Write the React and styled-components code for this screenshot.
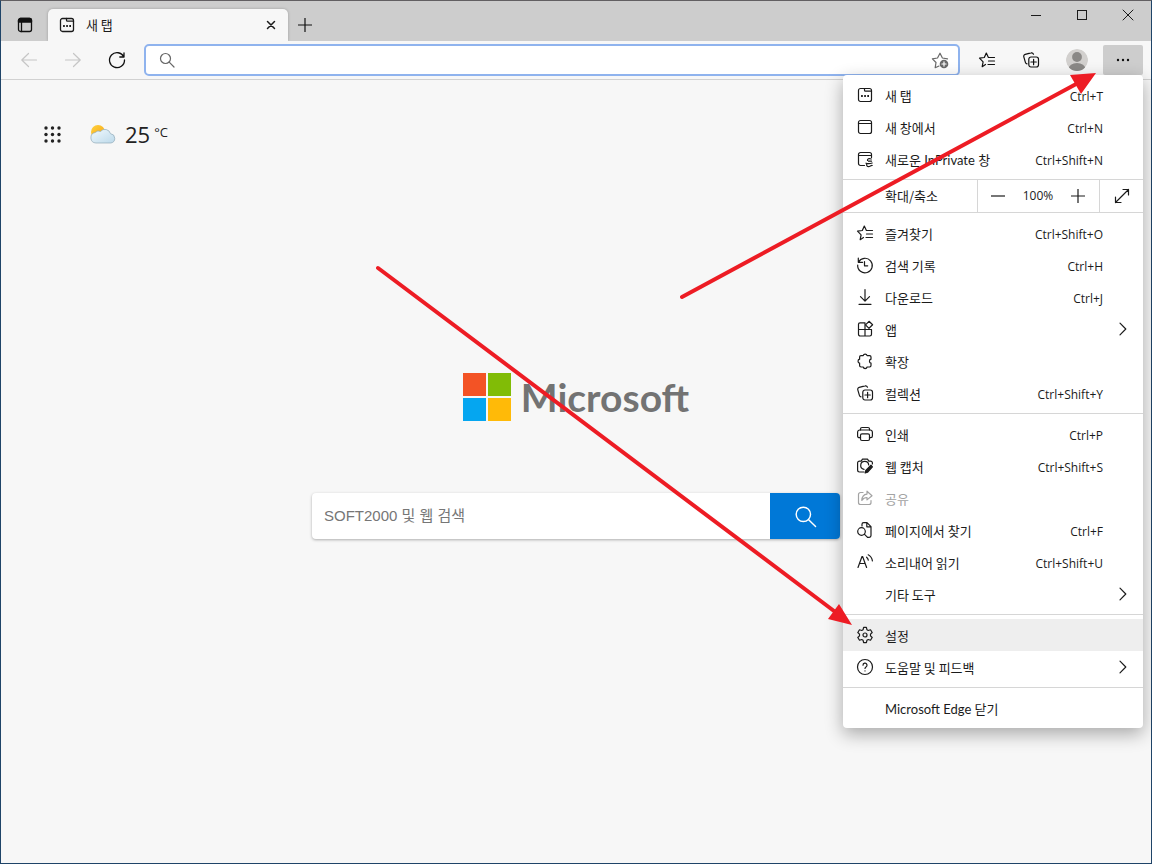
import React from "react";
import styled, { createGlobalStyle, css } from "styled-components";

const latin = `"Open Sans", "Noto Sans CJK KR", sans-serif`;
const korean = `"Noto Sans CJK KR", "Open Sans", sans-serif`;
const mixed = `Lato, "Noto Sans CJK KR", sans-serif`;

const GlobalStyle = createGlobalStyle`
  *, *::before, *::after { box-sizing: border-box; }
  body { margin: 0; background: #f7f7f7; color: #1b1b1b; font: 13px/16px ${korean}; }
  button, input { font: inherit; color: inherit; }
  button { padding: 0; border: 0; background: none; }
`;

/* ---------- icons ---------- */

const Svg = styled.svg`
  display: block;
  flex: none;
  overflow: visible;
  fill: none;
  stroke: currentColor;
  stroke-width: ${(p) => p.$weight || 1.2};
  stroke-linecap: round;
  stroke-linejoin: round;
`;

const shapes = {
  verticalTabs: (
    <>
      <rect x="1.5" y="1.5" width="13" height="13" rx="2" />
      <path d="M1.5 3.5a2 2 0 0 1 2-2h9a2 2 0 0 1 2 2v1.5h-13z" fill="currentColor" />
      <path d="M4.5 5v9.5" />
    </>
  ),
  newTab: (
    <>
      <rect x="1.5" y="1.5" width="13" height="13" rx="2" />
      <path d="M7.5 1.5v1.7a1 1 0 0 0 1 1h6" />
      <path d="M4.100 9h1.700M7.200 9h1.700M10.300 9h1.700" strokeWidth="1.900" strokeLinecap="butt" />
    </>
  ),
  window: (
    <>
      <rect x="1.5" y="1.5" width="13" height="13" rx="2" />
      <path d="M1.5 4.5h13" />
    </>
  ),
  inPrivate: (
    <>
      <path d="M7.5 14.5h-4a2 2 0 0 1-2-2v-9a2 2 0 0 1 2-2h9a2 2 0 0 1 2 2v3M1.5 4.5h13" />
      <path d="M14.3 8c-2.5-1-4 0-3.8 1.500M14.5 10.2h-3M9 12.200c2 .8 4 .6 6.200-.2M9.800 12.500c-.6 2.200.4 3.200 1.800 3.200 1.600 0 2.200-1.500 3.600-1.200" />
    </>
  ),
  close: <path d="M4.500 4.500l7 7M11.500 4.500l-7 7" />,
  plus: <path d="M8 1v14M1 8h14" strokeLinecap="butt" />,
  minus: <path d="M1 8h14" strokeLinecap="butt" />,
  back: <path d="M15.500 8H.8M7.500 1.500L.8 8l6.700 6.500" />,
  forward: <path d="M.5 8h14.700M8.500 1.500L15.200 8l-6.700 6.500" />,
  refresh: <path d="M14.800 5A7.500 7.500 0 1 0 15.500 8M15 .8V5h-4.200" />,
  search: (
    <>
      <circle cx="6.500" cy="6.500" r="5" />
      <path d="M10.200 10.200l4.800 4.800" />
    </>
  ),
  starAdd: (
    <>
      <path d="M7 14l-3.800 1.700.8-5.200L.4 6.800l5.100-.8L8 1.200l2.400 4.800 5.100.8" />
      <circle cx="12" cy="12" r="4.300" fill="currentColor" stroke="none" />
      <path d="M12 9.900v4.200M9.900 12h4.200" stroke="#fff" />
    </>
  ),
  favorites: (
    <>
      <path d="M6.500 12.500l-3.300 2.200.9-4.900L.5 6.200l4.800-.7L7.300 1l2.100 4.400" />
      <path d="M9.500 5.500h6M9.500 9h6M9 12.500h6.500" />
    </>
  ),
  collections: (
    <>
      <rect x="5.800" y="5" width="9.700" height="10" rx="2.200" />
      <path d="M10.600 7.300v5.400M7.900 10h5.400" />
      <path d="M4 11.800c-.8-.2-1.400-.7-1.600-1.500L.8 4.800c-.3-1.100.3-2.200 1.400-2.500L8 .9c1.100-.3 2 .2 2.500 1.300" />
    </>
  ),
  more: <path d="M3 8h.01M8 8h.01M13 8h.01" strokeWidth="2.400" />,
  history: (
    <>
      <path d="M1.300 1v4.300h4.300M1.500 5.200A7.300 7.300 0 1 1 .7 8" />
      <path d="M7.500 4.500v4.300h3.200" />
    </>
  ),
  download: <path d="M8 .5v11.500M3.500 7.700L8 12.200l4.500-4.500M2 15.300h12" />,
  apps: (
    <>
      <path d="M8 15V1.800H3a1.500 1.500 0 0 0-1.500 1.500v10A1.700 1.700 0 0 0 3.200 15h9.600a1.700 1.700 0 0 0 1.700-1.700V8.500h-13" />
      <path d="M12 .3l3.600 3.500L12 7.300 8.500 3.800z" />
    </>
  ),
  extensions: (
    <path d="M4 2.600h2.200a2 2 0 0 1 3.900 0h2.500a1.400 1.400 0 0 1 1.400 1.400v2.200a2 2 0 0 0 0 3.900v2.500a1.400 1.400 0 0 1-1.400 1.400h-2.500a2 2 0 0 1-3.900 0H4a1.400 1.400 0 0 1-1.400-1.400v-2.500a2 2 0 0 1 0-3.900V4A1.400 1.400 0 0 1 4 2.600z" />
  ),
  print: (
    <>
      <path d="M3.500 11.700H2.300a1.700 1.700 0 0 1-1.700-1.700V6.200a2.200 2.200 0 0 1 2.200-2.200h10.400a2.200 2.200 0 0 1 2.200 2.200V10a1.700 1.700 0 0 1-1.700 1.700h-1.200" />
      <path d="M3.500 4V3A1.500 1.500 0 0 1 5 1.500h6A1.500 1.500 0 0 1 12.500 3v1" />
      <rect x="3.500" y="7.800" width="9" height="6.700" rx="1.500" />
    </>
  ),
  capture: (
    <>
      <path d="M7 14H2.500A1.900 1.900 0 0 1 .6 12.100V5a1.900 1.900 0 0 1 1.900-1.900h1.700l1.300-2h5l1.300 2h1.700A1.900 1.900 0 0 1 15.400 5v1" />
      <path d="M7 11.300A4 4 0 1 1 11.700 7" />
      <path d="M8.200 15l.6-2.600 5.200-5.200 1.400 1.700-4.900 5.400z" fill="currentColor" />
    </>
  ),
  share: (
    <>
      <path d="M6 2.500H3.500A2 2 0 0 0 1.500 4.500v8a2 2 0 0 0 2 2h8.500a2 2 0 0 0 2-2V10.500" />
      <path d="M10 1.200l5 4.500-5 4.200V7.500c-2.500 0-4 .9-5.200 2.900.2-3.600 1.800-6 5.200-6.300z" />
    </>
  ),
  findOnPage: (
    <>
      <path d="M5 4V2.300A1.700 1.700 0 0 1 6.700.6H10l4 4v9a1.700 1.700 0 0 1-1.700 1.700H10.500M9.800.6v4.200H14" />
      <circle cx="4.500" cy="9.500" r="3.800" />
      <path d="M7.300 12.200l3 3" />
    </>
  ),
  readAloud: (
    <>
      <path d="M1 13.500L5 2.500h.6l4 11M2.500 9.500h5.700" />
      <path d="M9.600 3.200c1 .8 1.500 1.700 1.700 3M11.200.8c2.400 1.300 3.800 3.300 4.200 6" />
    </>
  ),
  settings: (
    <>
      <circle cx="8" cy="8" r="2" />
      <path d="M6.600.4h2.800l.5 2.300 1.400.8 2.200-.7 1.700 2.700-1.700 1.600v1.800l1.700 1.600-1.700 2.700-2.200-.7-1.400.8-.5 2.300H6.600l-.5-2.300-1.400-.8-2.200.7L.8 10.500l1.700-1.600V7.100L.8 5.500l1.700-2.700 2.200.7 1.400-.8z" />
    </>
  ),
  help: (
    <>
      <circle cx="8" cy="8" r="7.500" />
      <path d="M6 6.200a2 2 0 1 1 3 1.700c-.7.500-1 .8-1 1.600M8 11.800v.1" />
    </>
  ),
  chevron: <path d="M5 2.200L10.800 8 5 13.800" />,
  fullscreen: <path d="M1.500 14.500l13-13M9 1.500h5.500V7M1.500 9v5.500H7" />,
  minimize: <path d="M3 8.500h10" strokeLinecap="butt" />,
  maximize: <rect x="3.500" y="3.500" width="9" height="9" strokeLinejoin="miter" />,
  closeWindow: <path d="M3 3l10 10M13 3L3 13" />,
};

function Icon({ name, size = 16, weight }) {
  return (
    <Svg width={size} height={size} viewBox="0 0 16 16" $weight={weight} aria-hidden="true">
      {shapes[name]}
    </Svg>
  );
}

/* ---------- browser frame ---------- */

const BrowserWindow = styled.div`
  position: relative;
  display: flex;
  flex-direction: column;
  min-height: 100vh;
  border: 1px solid #1f4468;
  border-top-color: #625f62;
  background: #f7f7f7;
`;

const TitleBar = styled.header`
  display: flex;
  height: 40px;
  padding-left: 1px;
  background: #cdcdcd;
`;

const TabBarButton = styled.button`
  display: grid;
  place-items: center;
  width: ${(p) => p.$width}px;
  height: 32px;
  margin-top: 8px;
  color: #111;
`;

const Tab = styled.div`
  position: relative;
  display: flex;
  align-items: center;
  gap: 11px;
  width: 240px;
  margin-top: 8px;
  padding: 0 8px 0 11px;
  border-radius: 5px 5px 0 0;
  background: #f7f7f7;
  box-shadow: 0 0 3px rgba(0, 0, 0, 0.25);
  clip-path: inset(-4px -4px 0 -4px);
`;

const TabTitle = styled.span`
  flex: 1;
`;

const TabClose = styled.button`
  display: grid;
  place-items: center;
  width: 18px;
  height: 18px;
`;

const WindowControls = styled.div`
  display: flex;
  margin-left: auto;
`;

const WindowButton = styled.button`
  display: grid;
  place-items: center;
  width: 46px;
  height: 28px;
`;

const Toolbar = styled.nav`
  display: flex;
  align-items: center;
  gap: 4px;
  height: 39px;
  padding: 0 8px;
  border-bottom: 1px solid #d1d1d1;
  background: #f7f7f7;
`;

const ToolButton = styled.button`
  display: grid;
  place-items: center;
  width: ${(p) => p.$width || 40}px;
  height: 30px;
  border-radius: 2px;
  color: ${(p) => (p.disabled ? "#c6c6c6" : "#111")};
  background: ${(p) => (p.$open ? "#cdcdcd" : "transparent")};
`;

const AddressBar = styled.label`
  display: flex;
  flex: 1;
  align-items: center;
  height: 32px;
  margin: 0 3px;
  padding: 0 10px 0 13px;
  border: 2px solid #8fb3ee;
  border-radius: 5px;
  background: #fff;
  color: #666;
`;

const AddressInput = styled.input`
  flex: 1;
  min-width: 0;
  margin: 0 12px;
  border: 0;
  outline: 0;
  background: none;
`;

const AddFavorite = styled.button`
  color: #6a6a6a;
`;

const Avatar = styled.svg`
  display: block;
`;

/* ---------- new tab page ---------- */

const Page = styled.main`
  flex: 1;
`;

const PageHeader = styled.div`
  display: flex;
  align-items: center;
  gap: 28px;
  height: 108px;
  padding: 0 42px;
  color: #222;
`;

const Weather = styled.a`
  display: flex;
  align-items: center;
  color: inherit;
  font-family: ${latin};
  text-decoration: none;
`;

const Degrees = styled.span`
  margin-left: 9px;
  font-size: 22px;
  line-height: 28px;
`;

const Unit = styled.sup`
  align-self: flex-start;
  margin-left: 4px;
  font-size: 13px;
  line-height: 24px;
`;

const Hero = styled.section`
  display: flex;
  flex-direction: column;
  align-items: center;
  gap: 72px;
  padding: 185px 24px 24px;
`;

const Logo = styled.div`
  display: flex;
  align-items: center;
  gap: 10px;
  color: #737373;
  font-family: ${mixed};
  font-size: 39px;
  font-weight: 700;
  line-height: 48px;
`;

const SearchForm = styled.form`
  display: flex;
  width: 100%;
  max-width: 528px;
  height: 46px;
  border-radius: 4px;
  overflow: hidden;
  background: #fff;
  box-shadow: 0 1px 3px rgba(0, 0, 0, 0.3);
`;

const SearchInput = styled.input`
  flex: 1;
  min-width: 0;
  padding: 0 12px;
  border: 0;
  outline: 0;
  background: none;
  font-family: "Liberation Sans", "Noto Sans CJK KR", sans-serif;
  font-size: 15px;
  &::placeholder {
    color: #767676;
    opacity: 1;
  }
`;

const SearchButton = styled.button`
  display: grid;
  place-items: center;
  width: 70px;
  color: #fff;
  background: #0078d7;
`;

/* ---------- menu ---------- */

const Menu = styled.div`
  position: absolute;
  top: 74px;
  right: 8px;
  width: 300px;
  border-radius: 4px;
  background: #fff;
  box-shadow: 0 6px 18px rgba(0, 0, 0, 0.32);
`;

const divider = css`
  border-bottom: 1px solid #d6d6d6;
`;

const MenuGroup = styled.div`
  padding: 4px 0;
  &:not(:last-child) {
    ${divider}
  }
`;

const MenuItem = styled.button`
  display: flex;
  align-items: center;
  gap: 12px;
  width: 100%;
  height: 32px;
  padding: 0 12px 0 14px;
  text-align: left;
  color: ${(p) => (p.disabled ? "#a3a3a3" : "#1b1b1b")};
  background: ${(p) => (p.$active ? "#eee" : "transparent")};
`;

const IconSlot = styled.span`
  width: 16px;
  height: 16px;
`;

const Label = styled.span`
  flex: 1;
  padding-top: 2px;
  font-family: ${(p) => (p.$mixed ? mixed : korean)};
`;

const Shortcut = styled.kbd`
  margin-right: 28px;
  padding-top: 4px;
  font-family: ${latin};
  font-size: 12px;
`;

const ZoomRow = styled.div`
  display: flex;
  height: 33px;
  ${divider}
`;

const ZoomLabel = styled.span`
  flex: 1;
  padding-left: 42px;
  line-height: 32px;
`;

const ZoomControls = styled.div`
  display: grid;
  grid-template-columns: repeat(3, 40px);
  align-items: center;
  width: 122px;
  border-left: 1px solid #d6d6d6;
  text-align: center;
  font-family: ${latin};
  font-size: 12px;
`;

const ZoomButton = styled.button`
  display: grid;
  place-items: center;
  height: 32px;
`;

const FullscreenButton = styled(ZoomButton)`
  width: 44px;
  border-left: 1px solid #d6d6d6;
`;

const Annotation = styled.svg`
  position: absolute;
  top: -1px;
  left: -1px;
  pointer-events: none;
`;

const groups = [
  {
    items: [
      { icon: "newTab", label: "새 탭", keys: "Ctrl+T" },
      { icon: "window", label: "새 창에서", keys: "Ctrl+N" },
      { icon: "inPrivate", label: "새로운 InPrivate 창", keys: "Ctrl+Shift+N", mixed: true },
    ],
    zoomAfter: true,
  },
  {
    items: [
      { icon: "favorites", label: "즐겨찾기", keys: "Ctrl+Shift+O" },
      { icon: "history", label: "검색 기록", keys: "Ctrl+H" },
      { icon: "download", label: "다운로드", keys: "Ctrl+J" },
      { icon: "apps", label: "앱", submenu: true },
      { icon: "extensions", label: "확장" },
      { icon: "collections", label: "컬렉션", keys: "Ctrl+Shift+Y" },
    ],
  },
  {
    items: [
      { icon: "print", label: "인쇄", keys: "Ctrl+P" },
      { icon: "capture", label: "웹 캡처", keys: "Ctrl+Shift+S" },
      { icon: "share", label: "공유", disabled: true },
      { icon: "findOnPage", label: "페이지에서 찾기", keys: "Ctrl+F" },
      { icon: "readAloud", label: "소리내어 읽기", keys: "Ctrl+Shift+U" },
      { label: "기타 도구", submenu: true },
    ],
  },
  {
    items: [
      { icon: "settings", label: "설정", active: true },
      { icon: "help", label: "도움말 및 피드백", submenu: true },
    ],
  },
  { items: [{ label: "Microsoft Edge 닫기", mixed: true }] },
];

function ZoomSection() {
  return (
    <ZoomRow>
      <ZoomLabel>확대/축소</ZoomLabel>
      <ZoomControls>
        <ZoomButton aria-label="축소"><Icon name="minus" /></ZoomButton>
        <span>100%</span>
        <ZoomButton aria-label="확대"><Icon name="plus" /></ZoomButton>
      </ZoomControls>
      <FullscreenButton aria-label="전체 화면"><Icon name="fullscreen" /></FullscreenButton>
    </ZoomRow>
  );
}

function SettingsMenu() {
  return (
    <Menu>
      {groups.map((group, i) => (
        <React.Fragment key={i}>
          <MenuGroup>
            {group.items.map((item) => (
              <MenuItem key={item.label} disabled={item.disabled} $active={item.active}>
                <IconSlot>{item.icon && <Icon name={item.icon} />}</IconSlot>
                <Label $mixed={item.mixed}>{item.label}</Label>
                {item.keys && <Shortcut>{item.keys}</Shortcut>}
                {item.submenu && <Icon name="chevron" />}
              </MenuItem>
            ))}
          </MenuGroup>
          {group.zoomAfter && <ZoomSection />}
        </React.Fragment>
      ))}
    </Menu>
  );
}

function AppGrid() {
  const steps = [3, 9.5, 16];
  return (
    <svg width="19" height="19" viewBox="0 0 19 19" fill="#222" aria-hidden="true">
      {steps.map((y) => steps.map((x) => <circle key={`${x}-${y}`} cx={x} cy={y} r="1.700" />))}
    </svg>
  );
}

function WeatherIcon() {
  return (
    <svg width="26" height="20" viewBox="0 0 26 20" aria-hidden="true">
      <defs>
        <linearGradient id="sun" x1="0" y1="0" x2="1" y2="1">
          <stop offset="0" stopColor="#ffd23e" />
          <stop offset="1" stopColor="#f6a313" />
        </linearGradient>
        <linearGradient id="cloud" x1="0" y1="0" x2="1" y2="1">
          <stop offset="0" stopColor="#f2fafe" />
          <stop offset="1" stopColor="#bcd9ea" />
        </linearGradient>
      </defs>
      <circle cx="8" cy="8" r="7" fill="url(#sun)" />
      <path
        d="M6 19a5.300 5.300 0 0 1-.8-10.500A4.500 4.500 0 0 1 10.500 7.400a5.800 5.800 0 0 1 10 2.300 4.700 4.700 0 0 1 .4 9.300z"
        fill="url(#cloud)"
        stroke="#8fa9b8"
        strokeWidth=".7"
      />
    </svg>
  );
}

export default function App() {
  return (
    <>
      <GlobalStyle />
      <BrowserWindow>
        <TitleBar>
          <TabBarButton $width={46} aria-label="탭 작업 메뉴"><Icon name="verticalTabs" weight={1.3} /></TabBarButton>
          <Tab>
            <Icon name="newTab" weight={1.3} />
            <TabTitle>새 탭</TabTitle>
            <TabClose aria-label="탭 닫기"><Icon name="close" weight={1.5} /></TabClose>
          </Tab>
          <TabBarButton $width={34} aria-label="새 탭"><Icon name="plus" /></TabBarButton>
          <WindowControls>
            <WindowButton aria-label="최소화"><Icon name="minimize" weight={1} /></WindowButton>
            <WindowButton aria-label="최대화"><Icon name="maximize" weight={1} /></WindowButton>
            <WindowButton aria-label="닫기"><Icon name="closeWindow" weight={1} /></WindowButton>
          </WindowControls>
        </TitleBar>

        <Toolbar>
          <ToolButton disabled aria-label="뒤로"><Icon name="back" /></ToolButton>
          <ToolButton disabled aria-label="앞으로"><Icon name="forward" /></ToolButton>
          <ToolButton aria-label="새로 고침"><Icon name="refresh" weight={1.3} /></ToolButton>
          <AddressBar>
            <Icon name="search" />
            <AddressInput type="text" aria-label="주소 및 검색 창" />
            <AddFavorite type="button" aria-label="즐겨찾기에 추가"><Icon name="starAdd" /></AddFavorite>
          </AddressBar>
          <ToolButton aria-label="즐겨찾기"><Icon name="favorites" /></ToolButton>
          <ToolButton aria-label="컬렉션"><Icon name="collections" /></ToolButton>
          <ToolButton $width={44} aria-label="프로필">
            <Avatar width="22" height="22" viewBox="0 0 22 22" aria-hidden="true">
              <clipPath id="face"><circle cx="11" cy="11" r="11" /></clipPath>
              <g clipPath="url(#face)">
                <circle cx="11" cy="11" r="11" fill="#d2d0ce" />
                <circle cx="11" cy="8" r="4.900" fill="#8a8886" />
                <ellipse cx="11" cy="20" rx="8.500" ry="6" fill="#8a8886" />
              </g>
            </Avatar>
          </ToolButton>
          <ToolButton $open aria-label="설정 및 기타" aria-expanded="true"><Icon name="more" /></ToolButton>
        </Toolbar>

        <Page>
          <PageHeader>
            <AppGrid />
            <Weather href="#weather">
              <WeatherIcon />
              <Degrees>25</Degrees>
              <Unit>°C</Unit>
            </Weather>
          </PageHeader>
          <Hero>
            <Logo>
              <svg width="48" height="48" viewBox="0 0 48 48" aria-hidden="true">
                <path fill="#f35325" d="M0 0h23v23H0z" />
                <path fill="#81bc06" d="M25 0h23v23H25z" />
                <path fill="#05a6f0" d="M0 25h23v23H0z" />
                <path fill="#ffba08" d="M25 25h23v23H25z" />
              </svg>
              <span>Microsoft</span>
            </Logo>
            <SearchForm>
              <SearchInput type="text" placeholder="SOFT2000 및 웹 검색" aria-label="웹 검색" />
              <SearchButton type="button" aria-label="검색"><Icon name="search" size={23} weight={1} /></SearchButton>
            </SearchForm>
          </Hero>
        </Page>

        <SettingsMenu />

        <Annotation width="1110" height="640" viewBox="0 0 1110 640" aria-hidden="true">
          <g fill="#ed1c24" stroke="#ed1c24" strokeLinecap="round">
            <path d="M682 297L1078 83M378 268L838 614" strokeWidth="4" />
            <path d="M1096 73l-26 2 11 19zM852 625l-13-21-11 15z" stroke="none" />
          </g>
        </Annotation>
      </BrowserWindow>
    </>
  );
}
